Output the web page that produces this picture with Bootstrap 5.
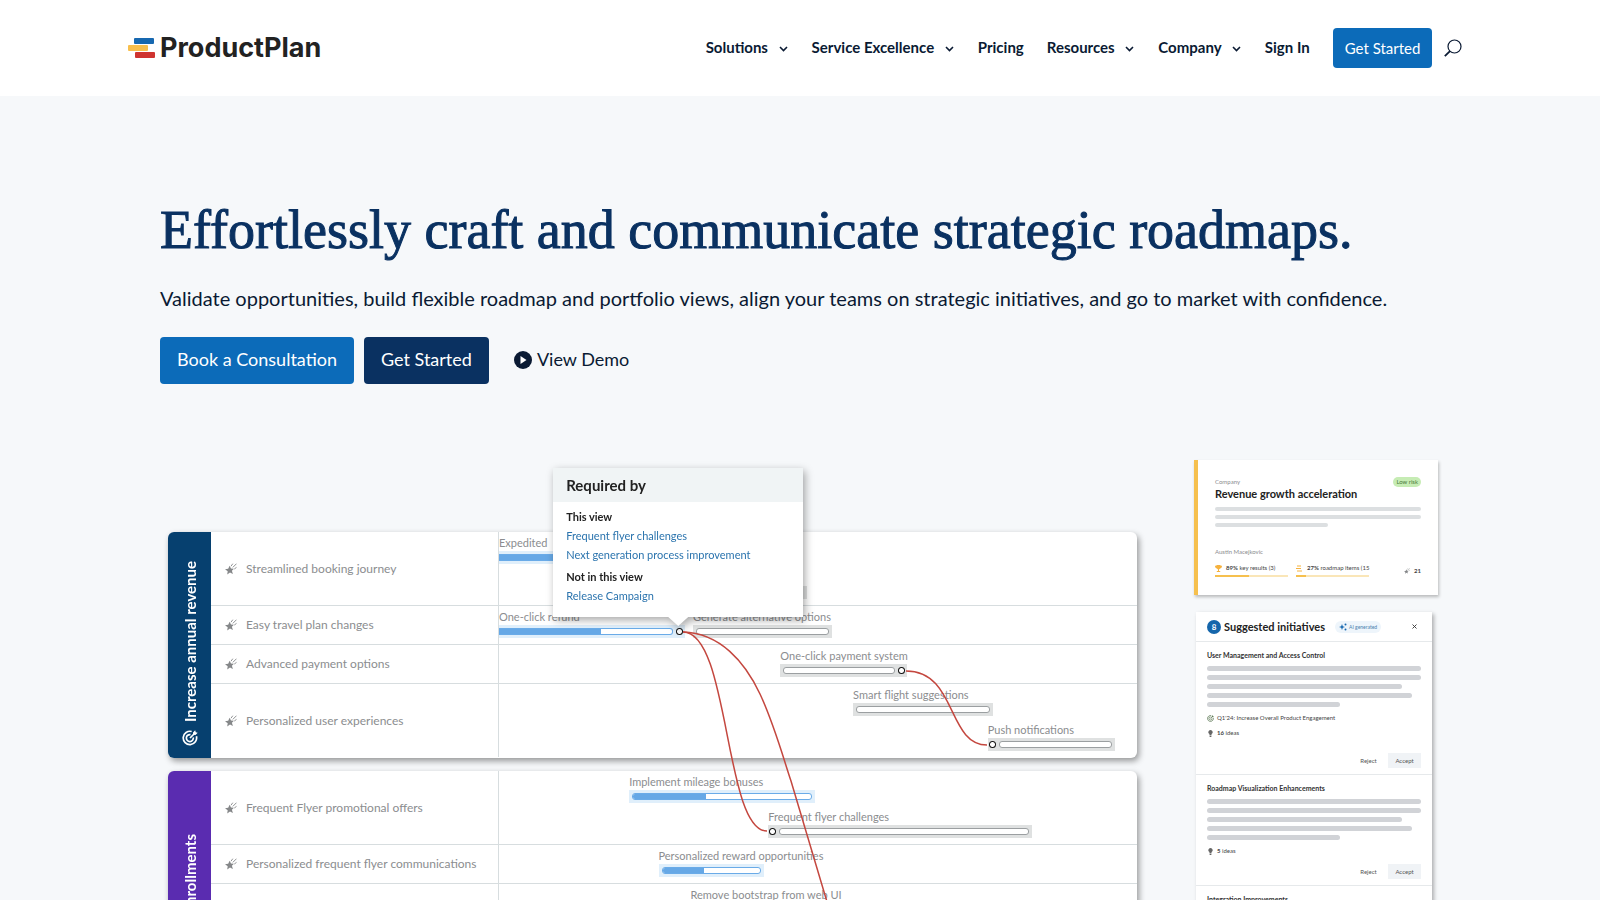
<!DOCTYPE html>
<html lang="en">
<head>
<meta charset="utf-8">
<meta name="viewport" content="width=device-width, initial-scale=1">
<title>ProductPlan</title>
<link href="https://cdn.jsdelivr.net/npm/bootstrap@5.3.0/dist/css/bootstrap.min.css" rel="stylesheet">
<style>
  :root { --navy: #0a3161; --blue: #0c6bb9; --ink: #0a1a33; --grey: #8b8d8f; }
  body { font-family: Lato, "Liberation Sans", sans-serif; color: var(--ink); background: #f6f8fa; overflow-x: hidden; }
  a { text-decoration: none; }

  .site-header { background: #fff; height: 96px; padding: 0 8.600% 0 8%; }
  .brand-name { font: 700 27px/32px Inter, sans-serif; color: #222; }
  .main-nav { gap: 23px; font-size: 15px; font-weight: 700; line-height: 20px; }
  .main-nav a { color: var(--ink); padding-bottom: 2px; }
  .main-nav svg { margin: 0 1px 0 7px; }
  .btn-blue, .btn-navy { --bs-btn-color: #fff; --bs-btn-hover-color: #fff; border: 0; border-radius: 4px; }
  .btn-blue { --bs-btn-bg: var(--blue); --bs-btn-hover-bg: #095a9d; }
  .btn-navy { --bs-btn-bg: var(--navy); --bs-btn-hover-bg: #07254a; }
  .btn-top { font-size: 15px; height: 40px; padding: 0 12px; }
  .btn-hero { font-size: 18px; height: 47px; padding: 0 17px 2px; }

  .hero { padding: 103px 10% 0; }
  .hero h1 { font: 400 54px/62px "Liberation Serif", serif; color: var(--navy); -webkit-text-stroke: 1px var(--navy); margin: 0 0 22px; }
  .hero-text { font-size: 20px; line-height: 30px; margin: 0 0 24px; }
  .hero-actions { gap: 10px; }
  .demo-link { color: var(--ink); font-size: 18px; margin-left: 7px; gap: 5px; padding-bottom: 2px; }

  .showcase { margin-top: 76px; gap: 57px; }
  .board { flex: 1; padding-left: 8px; margin-top: 72px; }
  .board-inner { position: relative; display: grid; gap: 13px; }
  .goal { display: flex; border-radius: 6px; background: #fff; box-shadow: 2px 3px 6px rgba(0,0,0,.4); }
  .goal-tab { width: 43px; border-radius: 6px 0 0 6px; color: #fff; font-size: 15px; font-weight: 700; line-height: 16px; padding-top: 29px; gap: 8px; }
  .tab-blue { background: #06406f; }
  .tab-purple { background: #5a2cb0; padding-top: 63px; }
  .goal-tab span { writing-mode: vertical-rl; transform: rotate(180deg); }
  .lane { display: flex; border-bottom: 1px solid #d7dddf; }
  .lane:last-child { border-bottom-color: transparent; }
  .lane-name { width: 288px; padding-left: 14px; gap: 9px; font-size: 12px; color: var(--grey); border-right: 1px solid #d7dddf; }
  .lane-track { flex: 1; min-width: 0; padding-bottom: 3px; }
  .track-line { display: grid; height: 35px; }
  .task { grid-area: 1 / 1; padding-top: 4px; font-size: 11px; line-height: 14px; color: var(--grey); white-space: nowrap; min-width: 0; }
  .task-name { height: 15px; }
  .task-band { height: 13px; padding: 3px; background: #dfe1e1; display: flex; align-items: center; gap: 3px; }
  .task-bar { flex: 1; height: 7px; border: 1px solid #9b9fa1; border-radius: 3px; background: #fff; overflow: hidden; }
  .task-band.is-blue { background: #e0effb; }
  .is-blue .task-bar { border-color: #6aabe8; }
  .task-fill { height: 7px; margin-top: -1px; background: #66a8e6; }
  .from-edge { padding-left: 0; }
  .from-edge .task-bar { border-left: 0; border-radius: 0 3px 3px 0; }
  .node { flex: none; width: 7px; height: 7px; border-radius: 50%; background: radial-gradient(circle, #fff 2px, #111 3px); }
  .node:first-child { margin-left: -2px; }
  .node:last-child { margin-right: -1px; }

  .overlay { position: absolute; left: 331px; right: 0; top: 0; height: 390px; }
  .overlay svg.links { position: absolute; width: 100%; height: 390px; }
  .req { position: absolute; top: -64px; left: 8.500%; width: 250px; background: #fff; filter: drop-shadow(2px 3px 4px rgba(0,0,0,.35)); font-size: 11px; line-height: 19px; color: #222; }
  .req h2 { font: 700 15px/34px Lato, sans-serif; margin: 0; padding: 0 13px; background: #f0f4f5; }
  .req-body { padding: 5px 13px 12px; }
  .req-body a { color: #2b74ae; display: block; }
  .req-body p { margin: 0; font-weight: 700; }
  .req-body p + a ~ p { margin-top: 3px; }
  .req-tip { position: absolute; left: 115px; top: 100%; width: 20px; height: 9px; background: #fff; clip-path: polygon(0 0, 100% 0, 50% 100%); }

  .side { width: 246px; }
  .okr { width: 244px; height: 135px; background: #fff; border-left: 4px solid #f6c04e; padding: 17px 17px 0; box-shadow: 1px 2px 3px rgba(0,0,0,.25); font-size: 6px; line-height: 8px; color: #444; }
  .muted { color: #8b8d8f; }
  .okr h3 { font-size: 11px; line-height: 13px; font-weight: 700; color: #222; margin: 0 0 7px; }
  .okr-owner { margin-top: 21px; }
  .risk { background: #c6ecb4; color: #4c7a3c; border-radius: 5px; padding: 1px 3px; }
  .ph { height: 4px; border-radius: 2px; background: #dcdfe1; margin-bottom: 4px; }
  .meter-line { height: 2px; background: #fae6b8; margin-top: 3px; }
  .meter-line div { height: 2px; background: #f6c04e; }
  .meter { width: 73px; white-space: nowrap; }
  .sug { width: 236px; margin: 17px 0 0 2px; background: #fff; box-shadow: 2px 2px 4px rgba(0,0,0,.3); font-size: 6px; line-height: 8px; color: #444; }
  .sug-head { height: 30px; padding: 0 15px 0 11px; border-bottom: 1px solid #e6e9eb; }
  .sug-head h3 { font-size: 11px; line-height: 16px; font-weight: 700; color: #222; margin: 0 10px 0 3px; }
  .count { width: 14px; height: 14px; border-radius: 50%; background: #1566ab; color: #fff; font-size: 8px; font-weight: 700; }
  .ai { background: #eef5fb; color: #4a7fae; border-radius: 6px; padding: 2px 4px; font-size: 5px; gap: 2px; }
  .idea { padding: 8px 11px 6px; border-bottom: 1px solid #e6e9eb; }
  .idea h4 { font-size: 7px; line-height: 10px; font-weight: 700; color: #333; margin: 0 0 6px; }
  .ph-lg { height: 5px; border-radius: 3px; background: #d1d3d7; margin-bottom: 4px; }
  .idea-meta { gap: 3px; margin-top: 7px; }
  .idea-actions { margin-top: 9px; }
  .idea-actions button { border: 0; background: none; height: 15px; width: 33px; padding: 0; font-size: 6px; color: #555; }
  .idea-actions .accept { background: #f0f3f6; margin-left: 3px; }
  .x-btn { border: 0; background: none; padding: 0; color: #333; line-height: 0; }
</style>
</head>
<body>
<svg width="0" height="0" class="position-absolute" aria-hidden="true">
  <symbol id="star" viewBox="0 0 12 12"><path fill="#858789" d="M4.600 2.800l1.400 2.800 2.900.1-2 2.100 1 3.200-2.900-1.500L2.200 11.400l.5-3.100L0 6.300l3.200-.5z"/><path stroke="#858789" stroke-width=".9" d="M6 3.200L7.800.7M7.800 4.400L11.500.700M9.300 6l2.200-1.600"/></symbol>
  <symbol id="target" viewBox="0 0 16 16"><g fill="none" stroke="currentColor" stroke-width="1.700"><path d="M14.400 6.300A6.700 6.700 0 1 1 9.700 1.500"/><path d="M11.300 7.500A3.500 3.500 0 1 1 8.500 4.600"/><path d="M8 8l4-4"/></g><path fill="currentColor" d="M11 2.500L13.200.3l.5 2 2 .5-2.200 2.200-2.500-.3z"/></symbol>
  <symbol id="bulb" viewBox="0 0 6 8"><path fill="#666" d="M3 0a2.500 2.500 0 0 0-1.200 4.700V6h2.400V4.700A2.500 2.500 0 0 0 3 0zM2 6.500h2V8H2z"/></symbol>
  <symbol id="chev" viewBox="0 0 9 6"><path d="M1 1l3.500 3.500L8 1" fill="none" stroke="#0a1a33" stroke-width="1.600"/></symbol>
</svg>

<header class="site-header d-flex align-items-center">
  <a href="#" class="d-flex align-items-center">
    <svg width="28" height="20" viewBox="0 0 28 20" class="me-1"><rect x="6" width="20" height="6" rx="1" fill="#1768b0"/><rect y="7" width="20" height="6" rx="1" fill="#f8bf4c"/><rect x="7" y="14" width="20" height="6" rx="1" fill="#cf3430"/></svg>
    <span class="brand-name">ProductPlan</span>
  </a>
  <nav class="main-nav d-flex align-items-center ms-auto">
    <a href="#">Solutions <svg width="9" height="6"><use href="#chev"/></svg></a>
    <a href="#">Service Excellence <svg width="9" height="6"><use href="#chev"/></svg></a>
    <a href="#">Pricing</a>
    <a href="#">Resources <svg width="9" height="6"><use href="#chev"/></svg></a>
    <a href="#">Company <svg width="9" height="6"><use href="#chev"/></svg></a>
    <a href="#">Sign In</a>
    <button class="btn btn-blue btn-top">Get Started</button>
  </nav>
  <button class="x-btn ms-2 ps-1" aria-label="Search"><svg width="18" height="18" viewBox="0 0 18 18" fill="none" stroke="#0a1a33" stroke-width="1.200"><circle cx="10.500" cy="7.500" r="6.500"/><path d="M6 12.200L.8 17.200" stroke-width="1.800"/></svg></button>
</header>

<main class="hero">
  <h1>Effortlessly craft and communicate strategic roadmaps.</h1>
  <p class="hero-text">Validate opportunities, build flexible roadmap and portfolio views, align your teams on strategic initiatives, and go to market with confidence.</p>
  <div class="hero-actions d-flex align-items-center">
    <button class="btn btn-blue btn-hero">Book a Consultation</button>
    <button class="btn btn-navy btn-hero">Get Started</button>
    <a href="#" class="demo-link d-flex align-items-center ps-2"><svg width="18" height="18" viewBox="0 0 18 18"><circle cx="9" cy="9" r="9" fill="#0a1a33"/><path d="M6.500 5l6 4-6 4z" fill="#fff"/></svg>View Demo</a>
  </div>

  <div class="showcase d-flex align-items-start">
    <section class="board">
      <div class="board-inner">
        <div class="goal">
          <div class="goal-tab tab-blue d-flex flex-column align-items-center"><span>Increase annual revenue</span><svg width="16" height="16"><use href="#target"/></svg></div>
          <div class="flex-grow-1">
            <div class="lane">
              <div class="lane-name d-flex align-items-center"><svg width="12" height="12"><use href="#star"/></svg>Streamlined booking journey</div>
              <div class="lane-track">
                <div class="track-line"><div class="task" style="width:30%"><div class="task-name">Expedited</div><div class="task-band is-blue from-edge"><div class="task-bar"><div class="task-fill"></div></div></div></div></div>
                <div class="track-line"><div class="task" style="margin-left:27%;width:21.300%"><div class="task-name"></div><div class="task-band"></div></div></div>
              </div>
            </div>
            <div class="lane">
              <div class="lane-name d-flex align-items-center"><svg width="12" height="12"><use href="#star"/></svg>Easy travel plan changes</div>
              <div class="lane-track">
                <div class="track-line">
                  <div class="task" style="width:29.200%"><div class="task-name">One-click refund</div><div class="task-band is-blue from-edge"><div class="task-bar"><div class="task-fill" style="width:59%"></div></div><div class="node"></div></div></div>
                  <div class="task" style="margin-left:30.400%;width:21.800%"><div class="task-name">Generate alternative options</div><div class="task-band"><div class="task-bar"></div></div></div>
                </div>
              </div>
            </div>
            <div class="lane">
              <div class="lane-name d-flex align-items-center"><svg width="12" height="12"><use href="#star"/></svg>Advanced payment options</div>
              <div class="lane-track">
                <div class="track-line"><div class="task" style="margin-left:44.100%;width:19.900%"><div class="task-name">One-click payment system</div><div class="task-band"><div class="task-bar"></div><div class="node"></div></div></div></div>
              </div>
            </div>
            <div class="lane">
              <div class="lane-name d-flex align-items-center"><svg width="12" height="12"><use href="#star"/></svg>Personalized user experiences</div>
              <div class="lane-track">
                <div class="track-line"><div class="task" style="margin-left:55.500%;width:21.900%"><div class="task-name">Smart flight suggestions</div><div class="task-band"><div class="task-bar"></div></div></div></div>
                <div class="track-line"><div class="task" style="margin-left:76.600%;width:20%"><div class="task-name">Push notifications</div><div class="task-band"><div class="node"></div><div class="task-bar"></div></div></div></div>
              </div>
            </div>
          </div>
        </div>

        <div class="goal">
          <div class="goal-tab tab-purple d-flex flex-column align-items-center"><span>Increase enrollments</span><svg width="16" height="16"><use href="#target"/></svg></div>
          <div class="flex-grow-1">
            <div class="lane">
              <div class="lane-name d-flex align-items-center"><svg width="12" height="12"><use href="#star"/></svg>Frequent Flyer promotional offers</div>
              <div class="lane-track">
                <div class="track-line"><div class="task" style="margin-left:20.400%;width:29.200%"><div class="task-name">Implement mileage bonuses</div><div class="task-band is-blue"><div class="task-bar"><div class="task-fill" style="width:41%"></div></div></div></div></div>
                <div class="track-line"><div class="task" style="margin-left:42.200%;width:41.400%"><div class="task-name">Frequent flyer challenges</div><div class="task-band"><div class="node"></div><div class="task-bar"></div></div></div></div>
              </div>
            </div>
            <div class="lane">
              <div class="lane-name d-flex align-items-center"><svg width="12" height="12"><use href="#star"/></svg>Personalized frequent flyer communications</div>
              <div class="lane-track">
                <div class="track-line"><div class="task" style="margin-left:25%;width:16.500%"><div class="task-name">Personalized reward opportunities</div><div class="task-band is-blue"><div class="task-bar"><div class="task-fill" style="width:43%"></div></div></div></div></div>
              </div>
            </div>
            <div class="lane">
              <div class="lane-name"></div>
              <div class="lane-track">
                <div class="track-line"><div class="task" style="margin-left:30%;width:25%"><div class="task-name">Remove bootstrap from web UI</div><div class="task-band"><div class="task-bar"></div></div></div></div>
              </div>
            </div>
          </div>
        </div>

        <div class="overlay">
          <div class="req">
            <h2>Required by</h2>
            <div class="req-body">
              <p>This view</p>
              <a href="#">Frequent flyer challenges</a>
              <a href="#">Next generation process improvement</a>
              <p>Not in this view</p>
              <a href="#">Release Campaign</a>
            </div>
            <div class="req-tip"></div>
          </div>
          <svg class="links pe-none" viewBox="0 0 638 390" preserveAspectRatio="none" fill="none" stroke="#c4473f" stroke-width="1.500">
            <path d="M184 100C231 100 225 299 268 299"/>
            <path d="M184 100C221 101 246 130 261 162C275 192 284 225 292 249L334 390"/>
            <path d="M407 139C458 139 448 213 488 213"/>
          </svg>
        </div>
      </div>
    </section>

    <aside class="side">
      <article class="okr">
        <div class="d-flex justify-content-between align-items-center"><span class="muted">Company</span><span class="risk">Low risk</span></div>
        <h3>Revenue growth acceleration</h3>
        <div class="ph"></div><div class="ph"></div><div class="ph" style="width:55%"></div>
        <div class="muted okr-owner">Austin Macejkovic</div>
        <div class="d-flex mt-2 gap-2">
          <div class="meter"><svg width="7" height="7" viewBox="0 0 7 7" class="me-1"><path fill="#f6b23e" d="M1.500 0h4v.7H7c0 2-1 2.600-1.900 2.800L4 4.500V6h1.200v1H1.800V6H3V4.500L1.900 3.500C1 3.300 0 2.700 0 .7h1.500z"/></svg><b>89%</b> key results (3)<div class="meter-line"><div style="width:47%"></div></div></div>
          <div class="meter"><svg width="7" height="7" viewBox="0 0 7 7" class="me-1"><path stroke="#f6b23e" d="M1 1h4M0 3.500h5M1 6h5"/></svg><b>27%</b> roadmap items (15<div class="meter-line"><div style="width:14%"></div></div></div>
          <div class="ms-auto align-self-center"><svg width="6" height="6" class="me-1"><use href="#star"/></svg><b>21</b></div>
        </div>
      </article>

      <section class="sug">
        <div class="sug-head d-flex align-items-center">
          <span class="count d-flex align-items-center justify-content-center">8</span>
          <h3>Suggested initiatives</h3>
          <span class="ai d-flex align-items-center"><svg width="8" height="8" viewBox="0 0 8 8" fill="#1768b0"><path d="M3 1l.8 2.200L6 4l-2.200.8L3 7l-.8-2.200L0 4l2.200-.8z"/><circle cx="6.500" cy="1.500" r="1"/><circle cx="6.500" cy="6.500" r="1"/></svg>AI generated</span>
          <button class="x-btn ms-auto" aria-label="Close"><svg width="5" height="5" viewBox="0 0 5 5" stroke="#333" stroke-width=".9"><path d="M.5.5l4 4M4.500.5l-4 4"/></svg></button>
        </div>
        <article class="idea">
          <h4>User Management and Access Control</h4>
          <div class="ph-lg"></div><div class="ph-lg"></div><div class="ph-lg" style="width:91%"></div><div class="ph-lg" style="width:96%"></div><div class="ph-lg" style="width:62%"></div>
          <div class="idea-meta d-flex align-items-center"><svg width="7" height="7" style="color:#5d7a55"><use href="#target"/></svg>Q1'24: Increase Overall Product Engagement</div>
          <div class="idea-meta d-flex align-items-center"><svg width="7" height="7"><use href="#bulb"/></svg><span><b>16</b> ideas</span></div>
          <div class="idea-actions d-flex justify-content-end mt-3"><button>Reject</button><button class="accept">Accept</button></div>
        </article>
        <article class="idea">
          <h4>Roadmap Visualization Enhancements</h4>
          <div class="ph-lg"></div><div class="ph-lg"></div><div class="ph-lg" style="width:91%"></div><div class="ph-lg" style="width:96%"></div><div class="ph-lg" style="width:62%"></div>
          <div class="idea-meta d-flex align-items-center"><svg width="7" height="7"><use href="#bulb"/></svg><span><b>5</b> ideas</span></div>
          <div class="idea-actions d-flex justify-content-end"><button>Reject</button><button class="accept">Accept</button></div>
        </article>
        <article class="idea">
          <h4>Integration Improvements</h4>
          <div class="ph-lg"></div><div class="ph-lg"></div><div class="ph-lg" style="width:91%"></div>
        </article>
      </section>
    </aside>
  </div>
</main>
<script src="https://cdn.jsdelivr.net/npm/bootstrap@5.3.0/dist/js/bootstrap.bundle.min.js"></script>
</body>
</html>
